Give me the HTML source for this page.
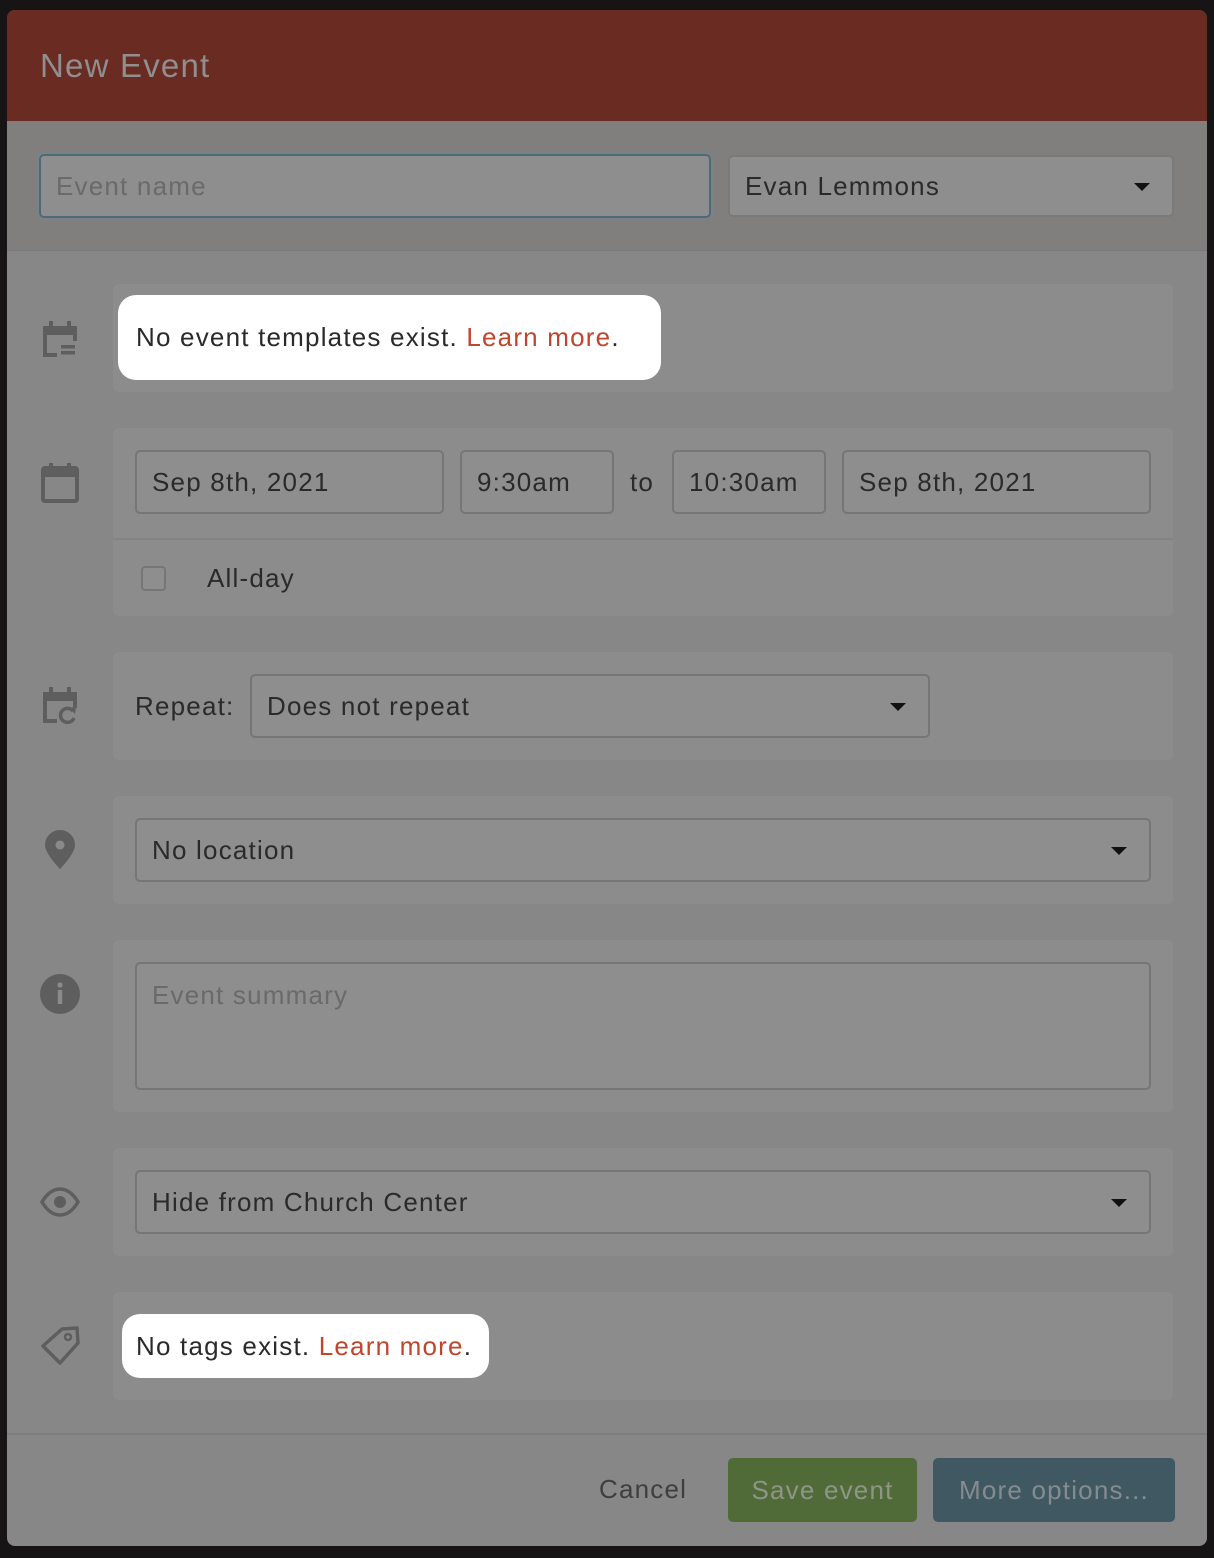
<!DOCTYPE html>
<html><head><style>
*{box-sizing:border-box;margin:0;padding:0}
body{width:1214px;height:1558px;background:#161414;font-family:"Liberation Sans",sans-serif;position:relative;overflow:hidden;color:#2a2a2a;letter-spacing:1.2px}
.a{position:absolute}
.modal{left:7px;top:10px;width:1200px;height:1536px;background:#878787;border-radius:8px;overflow:hidden}
.hdr{left:7px;top:10px;width:1200px;height:111px;background:#692b22;border-radius:8px 8px 0 0}
.top{left:7px;top:121px;width:1200px;height:130px;background:#807f7d;border-bottom:1px solid #7a7a7a}
.panel{position:absolute;left:113px;width:1060px;background:#8c8c8c;border-radius:6px}
.f{position:absolute;border:2px solid #767676;border-radius:5px;background:#8e8e8e;font-size:26px;padding-left:15px;display:flex;align-items:center;height:64px}
.caret{position:absolute;right:22px;top:27px;width:0;height:0;border-left:8px solid transparent;border-right:8px solid transparent;border-top:8px solid #111}
.t{font-size:26px;position:absolute}
.bubble{position:absolute;background:#fff;border-radius:18px;font-size:26px;display:flex;align-items:center;padding-left:18px}
.r{color:#c0452c}
.ic{position:absolute;left:40px}
</style></head><body>
<div class="a modal"></div>
<div class="a hdr"><div class="t" style="left:33px;top:37px;font-size:33px;color:#8f8f8f">New Event</div></div>
<div class="a top"></div>
<div class="f" style="left:39px;top:154px;width:672px;height:64px;border-color:#4e6a78;color:#6a6a6a;box-shadow:0 0 0 3px #7c8184">Event name</div>
<div class="f" style="left:728px;top:155px;width:446px;height:62px;border-color:#7a7a7a;background:#8e8e8e">Evan Lemmons<div class="caret" style="top:26px"></div></div>

<div class="panel" style="top:284px;height:108px"></div>
<div class="bubble" style="left:118px;top:295px;width:543px;height:85px">No event templates exist.&nbsp;<span class="r">Learn more</span>.</div>
<svg class="ic" style="top:320px" width="40" height="40" viewBox="0 0 40 40"><rect x="3" y="6" width="34" height="9" fill="#5e5e5e"/><rect x="9" y="1" width="4" height="8" fill="#5e5e5e"/><rect x="27" y="1" width="4" height="8" fill="#5e5e5e"/><path d="M5 13V35H17" stroke="#5e5e5e" stroke-width="4" fill="none"/><rect x="21" y="25" width="14" height="3.5" fill="#5e5e5e"/><rect x="21" y="31" width="14" height="3.5" fill="#5e5e5e"/><rect x="33" y="13" width="4" height="8" fill="#5e5e5e"/></svg>

<div class="panel" style="top:428px;height:188px"><div class="a" style="left:0;top:110px;width:1060px;height:2px;background:#838383"></div></div>
<svg class="ic" style="top:462px" width="40" height="42" viewBox="0 0 40 42"><rect x="3" y="6" width="34" height="33" rx="2" fill="none" stroke="#5e5e5e" stroke-width="4"/><rect x="3" y="6" width="34" height="9" fill="#5e5e5e"/><rect x="9" y="1" width="4" height="8" fill="#5e5e5e"/><rect x="27" y="1" width="4" height="8" fill="#5e5e5e"/></svg>
<div class="f" style="left:135px;top:450px;width:309px">Sep 8th, 2021</div>
<div class="f" style="left:460px;top:450px;width:154px">9:30am</div>
<div class="t" style="left:630px;top:467px">to</div>
<div class="f" style="left:672px;top:450px;width:154px">10:30am</div>
<div class="f" style="left:842px;top:450px;width:309px">Sep 8th, 2021</div>
<div class="a" style="left:141px;top:566px;width:25px;height:25px;border:2px solid #767676;border-radius:4px;background:#8e8e8e"></div>
<div class="t" style="left:207px;top:563px">All-day</div>

<div class="panel" style="top:652px;height:108px"></div>
<svg class="ic" style="top:686px" width="40" height="40" viewBox="0 0 40 40"><rect x="3" y="6" width="34" height="9" fill="#5e5e5e"/><rect x="9" y="1" width="4" height="8" fill="#5e5e5e"/><rect x="27" y="1" width="4" height="8" fill="#5e5e5e"/><path d="M5 13V35H17" stroke="#5e5e5e" stroke-width="4" fill="none"/><rect x="33" y="13" width="4" height="9" fill="#5e5e5e"/><path d="M33 25A7 7 0 1 0 34 32" stroke="#5e5e5e" stroke-width="3.5" fill="none"/><path d="M29 22L36 21L35 28Z" fill="#5e5e5e"/></svg>
<div class="t" style="left:135px;top:691px">Repeat:</div>
<div class="f" style="left:250px;top:674px;width:680px">Does not repeat<div class="caret"></div></div>

<div class="panel" style="top:796px;height:108px"></div>
<svg class="ic" style="top:829px" width="40" height="42" viewBox="0 0 40 42"><path d="M20 1A15 15 0 0 0 5 16C5 25 20 40 20 40S35 25 35 16A15 15 0 0 0 20 1Z" fill="#5e5e5e"/><circle cx="20" cy="16" r="4.5" fill="#8a8a8a"/></svg>
<div class="f" style="left:135px;top:818px;width:1016px">No location<div class="caret"></div></div>

<div class="panel" style="top:940px;height:172px"></div>
<svg class="ic" style="top:974px" width="40" height="40" viewBox="0 0 40 40"><circle cx="20" cy="20" r="20" fill="#5e5e5e"/><circle cx="20" cy="11" r="2.6" fill="#8a8a8a"/><rect x="17.8" y="16" width="4.4" height="14" fill="#8a8a8a"/></svg>
<div class="f" style="left:135px;top:962px;width:1016px;height:128px;align-items:flex-start;padding-top:16px;color:#6a6a6a">Event summary</div>

<div class="panel" style="top:1148px;height:108px"></div>
<svg class="ic" style="top:1186px" width="40" height="32" viewBox="0 0 40 32"><path d="M2 16C8 6 14 3 20 3S32 6 38 16C32 26 26 29 20 29S8 26 2 16Z" fill="none" stroke="#5e5e5e" stroke-width="3.5"/><circle cx="20" cy="16" r="6" fill="#5e5e5e"/></svg>
<div class="f" style="left:135px;top:1170px;width:1016px">Hide from Church Center<div class="caret"></div></div>

<div class="panel" style="top:1292px;height:108px"></div>
<svg class="ic" style="top:1325px" width="40" height="42" viewBox="0 0 40 42"><path d="M3 21L22 4L37 3L38 18L20 38Z" fill="none" stroke="#5e5e5e" stroke-width="3.5" stroke-linejoin="round"/><circle cx="28" cy="12" r="3" fill="none" stroke="#5e5e5e" stroke-width="2.5"/></svg>
<div class="bubble" style="left:122px;top:1314px;width:367px;height:64px;padding-left:14px">No tags exist.&nbsp;<span class="r">Learn more</span>.</div>

<div class="a" style="left:7px;top:1433px;width:1200px;height:2px;background:#7d7d7d"></div>
<div class="t" style="left:599px;top:1474px;color:#3e3e3e">Cancel</div>
<div class="a" style="left:728px;top:1458px;width:189px;height:64px;background:#506b38;border-radius:5px;color:#8f9589;font-size:26px;display:flex;align-items:center;justify-content:center">Save event</div>
<div class="a" style="left:933px;top:1458px;width:242px;height:64px;background:#3f5862;border-radius:5px;color:#858c90;font-size:26px;display:flex;align-items:center;justify-content:center">More options...</div>
</body></html>
